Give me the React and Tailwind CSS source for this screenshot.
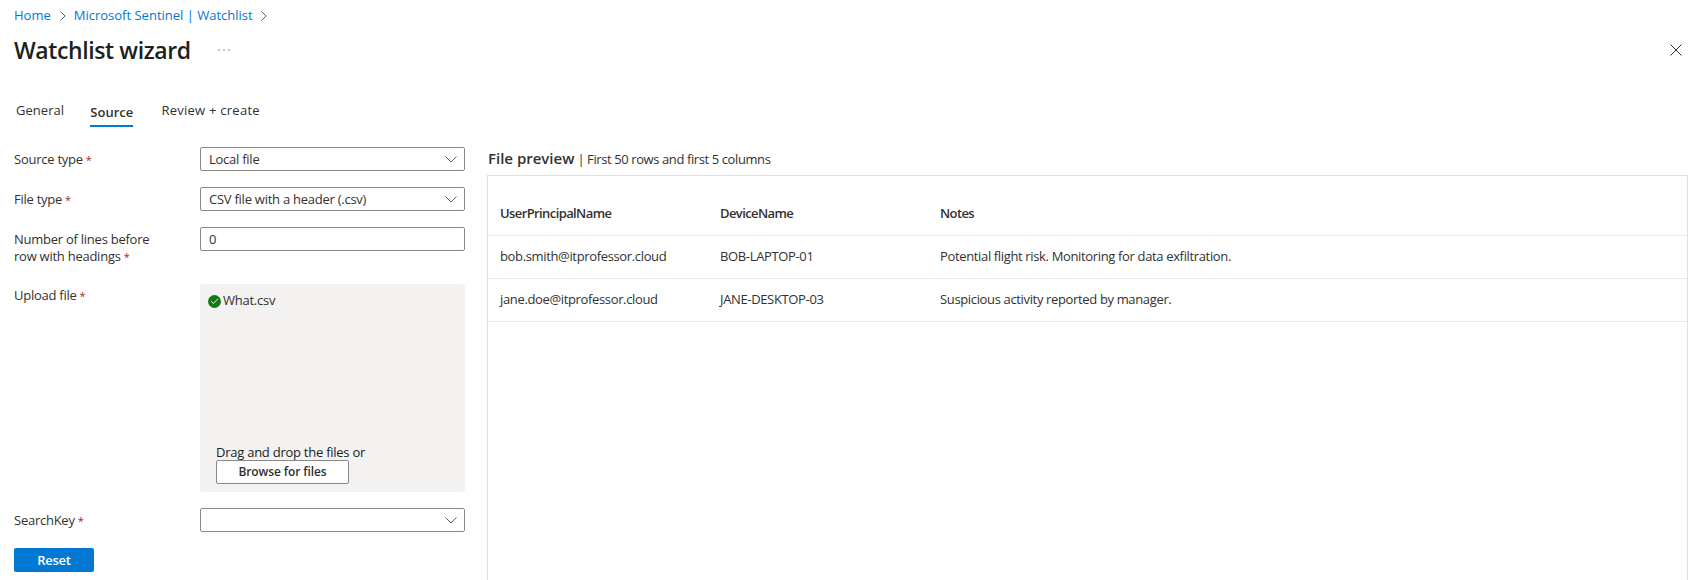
import React from 'react'
import { Check } from 'lucide-react'

function Required() {
    return <span className="ml-[3px] text-[11px] text-[#a4262c]">*</span>
}

function ChevronDownThin() {
    return (
        <svg width="12" height="7" viewBox="0 0 12 7" fill="none" stroke="#605e5c" strokeWidth="1">
            <path d="M0.5 0.5 L6 6 L11.5 0.5" />
        </svg>
    )
}

function ChevronRightThin({ className }) {
    return (
        <svg className={className} width="6" height="10" viewBox="0 0 6 10" fill="none" stroke="#605e5c" strokeWidth="1">
            <path d="M0.5 0.5 L5 5 L0.5 9.5" />
        </svg>
    )
}

function Select({ value }) {
    return (
        <div className="flex items-center justify-between h-6 w-[265px] border border-[#8a8886] rounded-[2px] pl-2 pr-[7px] text-[#323130]">
            <span className="pt-[1px]">{value}</span>
            <ChevronDownThin />
        </div>
    )
}

const rows = [
    ['bob.smith@itprofessor.cloud', 'BOB-LAPTOP-01', 'Potential flight risk. Monitoring for data exfiltration.'],
    ['jane.doe@itprofessor.cloud', 'JANE-DESKTOP-03', 'Suspicious activity reported by manager.'],
]

export default function App() {
    return (
        <div className="h-[580px] overflow-hidden bg-white text-[13px] tracking-[-0.25px] text-[#323130] font-['Open_Sans',sans-serif]">
            {/* Breadcrumb */}
            <div className="flex items-center h-[18px] mt-[7px] pl-[14px] text-[#0078d4] tracking-normal">
                <span>Home</span>
                <ChevronRightThin className="ml-[9px] mr-[8px]" />
                <span>Microsoft Sentinel | Watchlist</span>
                <ChevronRightThin className="ml-[8px]" />
            </div>

            {/* Title */}
            <div className="flex items-center justify-between h-8 mt-[9px] pl-[14px] pr-[22px]">
                <div className="flex items-center">
                    <h1 className="w-[204px] text-[23px] leading-8 font-semibold tracking-[-0.4px] text-[#201f1e]">Watchlist wizard</h1>
                    <svg width="12" height="2" viewBox="0 0 12 2" fill="#605e5c">
                        <circle cx="1" cy="1" r="0.7" />
                        <circle cx="6" cy="1" r="0.7" />
                        <circle cx="11" cy="1" r="0.7" />
                    </svg>
                </div>
                <svg width="12" height="12" viewBox="0 0 12 12" fill="none" stroke="#323130" strokeWidth="1">
                    <path d="M0.5 0.5 L11.5 11.5 M11.5 0.5 L0.5 11.5" />
                </svg>
            </div>

            {/* Tabs */}
            <div className="flex items-start h-[27px] mt-[34px] pl-[16px] tracking-[0.05px]">
                <span className="leading-[20px]">General</span>
                <span className="ml-[26px] h-[27px] leading-[24px] font-semibold border-b-2 border-[#0078d4] text-[#323130]">Source</span>
                <span className="ml-[28px] leading-[20px] tracking-[0.25px]">Review + create</span>
            </div>

            <div className="flex mt-[20px] pl-[14px] pr-[16px]">
                {/* Form */}
                <div className="w-[451px] shrink-0">
                    <div className="flex items-center h-6">
                        <label className="w-[186px] pt-[1px]">Source type<Required /></label>
                        <Select value="Local file" />
                    </div>
                    <div className="flex items-center h-6 mt-4">
                        <label className="w-[186px] pt-[1px]">File type<Required /></label>
                        <Select value="CSV file with a header (.csv)" />
                    </div>
                    <div className="flex mt-4 h-[33px]">
                        <label className="w-[186px] leading-[17px] pt-[4px]">Number of lines before<br />row with headings<Required /></label>
                        <div className="flex items-center h-6 w-[265px] border border-[#8a8886] rounded-[2px] px-2 pt-[1px]">0</div>
                    </div>
                    <div className="flex mt-[24px]">
                        <label className="w-[186px] pt-[2px] leading-[18px]">Upload file<Required /></label>
                        <div className="flex flex-col w-[265px] h-[208px] bg-[#f3f2f1] rounded-[2px] pl-2 pt-[8px] pb-2">
                            <div className="flex items-center gap-[2px] h-[18px]">
                                <span className="flex items-center justify-center w-[13px] h-[13px] rounded-full bg-[#107c10] text-white">
                                    <Check className="w-[9px] h-[9px]" strokeWidth={2.5} />
                                </span>
                                <span>What.csv</span>
                            </div>
                            <div className="mt-auto pl-2">
                                <div className="leading-[16px] text-[#201f1e]">Drag and drop the files or</div>
                                <button className="flex items-center justify-center w-[133px] h-6 bg-white border border-[#8a8886] rounded-[2px] font-semibold text-[12px] tracking-[-0.1px] text-[#323130]">Browse for files</button>
                            </div>
                        </div>
                    </div>
                    <div className="flex items-center h-6 mt-4">
                        <label className="w-[186px] pt-[1px]">SearchKey<Required /></label>
                        <Select value="" />
                    </div>
                    <button className="block w-20 h-6 mt-4 pt-[2px] bg-[#0078d4] rounded-[2px] text-white font-semibold">Reset</button>
                </div>

                {/* Preview */}
                <div className="flex-1 ml-[22px] min-w-0">
                    <div className="h-[28px] pl-[1px] leading-[22px]">
                        <span className="text-[15px] font-semibold tracking-normal">File preview</span>
                        <span className="tracking-[-0.4px]"> | First 50 rows and first 5 columns</span>
                    </div>
                    <div className="h-[500px] border border-[#e1dfdd] tracking-[-0.35px]">
                        <div className="flex items-center h-[60px] pt-[17px] pl-3 border-b border-[#edebe9]">
                            <span className="w-[220px] font-semibold tracking-[-0.6px]">UserPrincipalName</span>
                            <span className="w-[220px] font-semibold tracking-[-0.6px]">DeviceName</span>
                            <span className="font-semibold tracking-[-0.6px]">Notes</span>
                        </div>
                        {rows.map((row) => (
                            <div key={row[0]} className="flex items-center h-[43px] pl-3 border-b border-[#edebe9]">
                                <span className="w-[220px]">{row[0]}</span>
                                <span className="w-[220px]">{row[1]}</span>
                                <span>{row[2]}</span>
                            </div>
                        ))}
                    </div>
                </div>
            </div>
        </div>
    )
}
